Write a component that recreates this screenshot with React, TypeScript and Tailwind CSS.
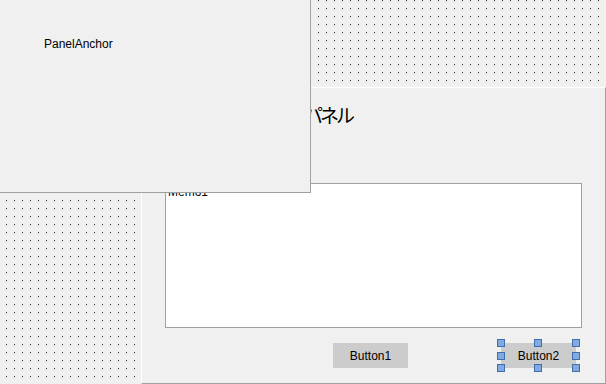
import React from 'react';

const Handle: React.FC<{ className: string }> = ({ className }) => (
  <span className={`absolute w-2 h-2 border border-[#3d6fb0] bg-[#82aade] ${className}`} />
);

const DesignButton: React.FC<{ label: string; selected?: boolean }> = ({ label, selected }) => (
  <div className="relative w-[75px] h-[25px] bg-[#cccccc] flex items-center justify-center text-[12px] text-black">
    {label}
    {selected && (
      <>
        <Handle className="-left-[4px] -top-[4px]" />
        <Handle className="left-[33px] -top-[4px]" />
        <Handle className="-right-[4px] -top-[4px]" />
        <Handle className="-left-[4px] top-[9px]" />
        <Handle className="-right-[4px] top-[9px]" />
        <Handle className="-left-[4px] -bottom-[4px]" />
        <Handle className="left-[33px] -bottom-[4px]" />
        <Handle className="-right-[4px] -bottom-[4px]" />
      </>
    )}
  </div>
);

export default function App() {
  return (
    <div className="relative w-[606px] h-[384px] overflow-hidden bg-[#f0f0f0] font-['Liberation_Sans',sans-serif] text-[12px] text-black">
      {/* designer grid */}
      <svg className="absolute inset-0" width="606" height="384">
        <defs>
          <pattern id="grid" width="8" height="8" patternUnits="userSpaceOnUse">
            <rect x="6" y="0" width="1" height="1" fill="#3b2410" />
          </pattern>
        </defs>
        <rect width="606" height="384" fill="url(#grid)" />
      </svg>

      <div className="relative pl-[141px] pt-[87px]">
        <div className="w-[465px] h-[297px] bg-[#f0f0f0] border border-t-white border-l-white border-r-[#a0a0a0] border-b-[#a0a0a0] flex flex-col">
          <div className="h-[95px] pl-[162px] pt-[15px]">
            <span className="font-['Noto_Sans_CJK_JP',sans-serif] text-[19px] leading-[24px] tracking-[-3px]">
              パネル
            </span>
          </div>
          <div className="ml-[23px] w-[417px] h-[145px] bg-white border border-[#a0a0a0] px-[2px] pt-[1px] leading-[15px]">
            Memo1
          </div>
          <div className="flex gap-[93px] pl-[191px] pt-[15px]">
            <DesignButton label="Button1" />
            <DesignButton label="Button2" selected />
          </div>
        </div>
      </div>

      <div className="absolute left-0 top-0 w-[311px] h-[193px] bg-[#f0f0f0] border-r border-b border-[#a0a0a0]">
        <div className="pl-[44px] pt-[37px] leading-[15px]">PanelAnchor</div>
      </div>
    </div>
  );
}
